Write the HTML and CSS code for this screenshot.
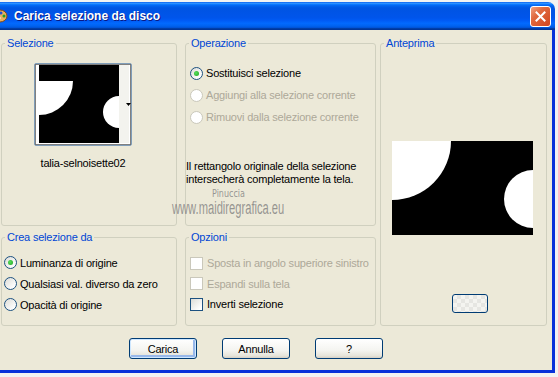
FILE: index.html
```html
<!DOCTYPE html>
<html lang="it">
<head>
  <meta charset="UTF-8">
  <meta name="viewport" content="width=device-width, initial-scale=1.0">
  <title>Carica selezione da disco</title>
  <link rel="stylesheet" href="styles.css">
</head>
<body>

  <div class="window">
    <div class="titlebar">
      <svg class="app-icon" width="16" height="16" viewBox="0 0 16 16">
        <ellipse cx="8" cy="8" rx="7" ry="6" fill="#e8b060" stroke="#8a4a10" stroke-width="1"/>
        <circle cx="5" cy="6" r="1.5" fill="#d02020"/>
        <circle cx="9" cy="5" r="1.5" fill="#2050d0"/>
        <circle cx="12" cy="8" r="1.5" fill="#20a020"/>
        <circle cx="7" cy="10" r="1.6" fill="#fff"/>
      </svg>
      <span class="title">Carica selezione da disco</span>
      <button class="close-btn" title="Chiudi">
        <svg width="11" height="11" viewBox="0 0 11 11">
          <path d="M1.5 1.5 L9.5 9.5 M9.5 1.5 L1.5 9.5" stroke="#fff" stroke-width="2" stroke-linecap="square"/>
        </svg>
      </button>
    </div>

    <div class="content">
      <div class="groups">

        <fieldset class="group g-sel">
          <legend>Selezione</legend>
          <div class="thumb">
            <svg width="96" height="81" viewBox="0 0 96 81">
              <rect x="4" y="1" width="80" height="78" fill="#000"/>
              <rect x="84" y="1" width="10" height="78" fill="#f3f3ee"/>
              <path d="M4 17 H38 A34 34 0 0 1 4 51 Z" fill="#fff"/>
              <path d="M84 32 A16 16 0 0 0 84 64 Z" fill="#fff"/>
              <path d="M91 39 H96 L93.5 42 Z" fill="#000"/>
              <rect x="0.5" y="0.5" width="95" height="80" fill="none" stroke="#000" stroke-width="1" stroke-dasharray="1 1"/>
            </svg>
          </div>
          <div class="thumb-name">talia-selnoisette02</div>
        </fieldset>

        <fieldset class="group g-op">
          <legend>Operazione</legend>
          <div class="options op-list">
            <label class="opt"><span class="radio checked"></span>Sostituisci selezione</label>
            <label class="opt disabled"><span class="radio"></span>Aggiungi alla selezione corrente</label>
            <label class="opt disabled"><span class="radio"></span>Rimuovi dalla selezione corrente</label>
          </div>
          <p class="info">Il rettangolo originale della selezione<br>intersecherà completamente la tela.</p>
        </fieldset>

        <fieldset class="group g-prev">
          <legend>Anteprima</legend>
          <svg class="preview" width="141" height="94" viewBox="0 0 141 94">
            <rect width="141" height="94" fill="#000"/>
            <path d="M0 0 H59 A59 59 0 0 1 0 59 Z" fill="#fff"/>
            <path d="M141 29 A29 29 0 0 0 141 87 Z" fill="#fff"/>
          </svg>
          <button class="bg-btn"></button>
        </fieldset>

        <fieldset class="group g-crea">
          <legend>Crea selezione da</legend>
          <div class="options crea-list">
            <label class="opt"><span class="radio checked"></span>Luminanza di origine</label>
            <label class="opt"><span class="radio"></span>Qualsiasi val. diverso da zero</label>
            <label class="opt"><span class="radio"></span>Opacità di origine</label>
          </div>
        </fieldset>

        <fieldset class="group g-opz">
          <legend>Opzioni</legend>
          <div class="options opz-list">
            <label class="opt disabled"><span class="check"></span>Sposta in angolo superiore sinistro</label>
            <label class="opt disabled"><span class="check"></span>Espandi sulla tela</label>
            <label class="opt"><span class="check"></span>Inverti selezione</label>
          </div>
        </fieldset>

      </div>

      <div class="buttons">
        <button class="btn default">Carica</button>
        <button class="btn">Annulla</button>
        <button class="btn">?</button>
      </div>
    </div>

    <!-- filigrana dello screenshot -->
    <div class="watermark">
      <span class="wm-name">Pinuccia</span>
      <span class="wm-site">www.maidiregrafica.eu</span>
    </div>
  </div>

</body>
</html>
```

FILE: styles.css
```css
body {
  margin: 0;
  padding: 0;
  background-color: #f2f2f2;
  font-family: "Liberation Sans", Arial, sans-serif;
  font-size: 11px;
  letter-spacing: -0.2px;
  color: #000;
  overflow: hidden;
}
.window {
  position: relative;
  width: 555px;
  margin-top: 2px;
}
.titlebar {
  display: flex;
  align-items: center;
  height: 28px;
  border-top-right-radius: 7px;
  background: linear-gradient(to bottom, #0058ee 0%, #3593ff 4%, #288eff 6%, #127dff 8%, #036ffc 10%, #0262ee 14%, #0057e5 20%, #0054e3 24%, #0055eb 56%, #005bf5 66%, #026afe 76%, #0062ef 86%, #0052d6 92%, #0040ab 94%, #003092 100%);
}
.app-icon {
  margin-left: -8px;
  flex-shrink: 0;
}
.title {
  margin-left: 6px;
  color: white;
  font-weight: bold;
  font-size: 12px;
  letter-spacing: 0;
  text-shadow: 1px 1px #0a1883;
}
.close-btn {
  margin-left: auto;
  margin-right: 4px;
  width: 21px;
  height: 21px;
  padding: 0;
  border: 1px solid white;
  border-radius: 3px;
  background: linear-gradient(135deg, #f0a080 0%, #e06a40 35%, #d2451c 100%);
  display: flex;
  justify-content: center;
  align-items: center;
}
.content {
  box-sizing: border-box;
  height: 343px;
  padding: 7px 0 0 1px;
  background-color: #ece9d8;
  border-right: 3px solid #0831d9;
  border-bottom: 3px solid #0831d9;
}
.groups {
  display: grid;
  grid-template-columns: 180px 199px 167px;
  grid-template-rows: 189px 95px;
  row-gap: 5px;
}
.group {
  margin: 0;
  padding: 0;
  min-width: 0;
  border: 1px solid #d0d0bf;
  border-radius: 3px;
}
.group legend {
  padding: 0 2px;
  margin-left: 3px;
  line-height: 13px;
  color: #0046d5;
}
.g-sel, .g-crea {
  width: 176px;
  box-sizing: border-box;
}
.g-op, .g-opz {
  width: 191px;
  box-sizing: border-box;
  margin-left: 4px;
}
.g-prev {
  grid-column: 3;
  grid-row: 1 / span 2;
}
.g-crea {
  grid-column: 1;
  grid-row: 2;
}
.g-opz {
  grid-column: 2;
  grid-row: 2;
}

/* Selezione */
.g-sel {
  display: flex;
  flex-direction: column;
  align-items: center;
  padding-right: 12px;
}
.thumb {
  margin-top: 13px;
  width: 96px;
  height: 81px;
  border: 1px solid #7f9db9;
  border-radius: 2px;
  background: white;
}
.thumb svg {
  display: block;
}
.thumb-name {
  margin-top: 11px;
  line-height: 13px;
}

/* opzioni */
.options {
  display: flex;
  flex-direction: column;
}
.opt {
  display: flex;
  align-items: center;
  gap: 3px;
  height: 22px;
  white-space: nowrap;
}
.opt.disabled {
  color: #aca899;
}
.op-list {
  padding: 12px 0 0 4px;
}
.crea-list {
  padding: 8px 0 0 2px;
}
.crea-list .opt {
  height: 21px;
}
.opz-list {
  padding: 9px 0 0 4px;
}
.opz-list .opt {
  height: 20.5px;
  gap: 4px;
}
.radio {
  position: relative;
  box-sizing: border-box;
  width: 13px;
  height: 13px;
  border-radius: 50%;
  border: 1px solid #1c5180;
  background: linear-gradient(135deg, #dcdcd7 0%, #ffffff 85%);
  flex-shrink: 0;
}
.radio.checked::after {
  content: "";
  position: absolute;
  left: 3px;
  top: 3px;
  width: 5px;
  height: 5px;
  border-radius: 50%;
  background: radial-gradient(circle at 40% 40%, #55e05c, #21a121);
}
.disabled .radio {
  border-color: #cac8bb;
  background: #fff;
}
.check {
  box-sizing: border-box;
  width: 13px;
  height: 13px;
  border: 1px solid #1c5180;
  background: linear-gradient(135deg, #dcdcd7 0%, #ffffff 85%);
  flex-shrink: 0;
}
.disabled .check {
  border-color: #cac8bb;
  background: #fff;
}
.info {
  margin: 32px 0 0 0;
  line-height: 13px;
}

/* Anteprima */
.g-prev {
  display: flex;
  flex-direction: column;
  align-items: flex-start;
}
.preview {
  display: block;
  margin: 91px 0 0 11px;
}
.bg-btn {
  margin: 59px 0 0 71px;
  width: 36px;
  height: 19px;
  padding: 0;
  border: 1px solid #003c74;
  border-radius: 3px;
  background-color: #f4f4f0;
  background-image:
    linear-gradient(45deg, #e6e6e2 25%, transparent 25%, transparent 75%, #e6e6e2 75%),
    linear-gradient(45deg, #e6e6e2 25%, transparent 25%, transparent 75%, #e6e6e2 75%);
  background-size: 8px 8px;
  background-position: 0 0, 4px 4px;
}

/* pulsanti */
.buttons {
  display: flex;
  gap: 25px;
  margin-top: 12px;
  padding-left: 128px;
}
.btn {
  width: 68px;
  height: 21px;
  padding: 0;
  border: 1px solid #003c74;
  border-radius: 3px;
  background: linear-gradient(to bottom, #ffffff 0%, #f4f4f0 60%, #e6e4da 88%, #d6d0c5 100%);
  font-family: "Liberation Sans", Arial, sans-serif;
  font-size: 11px;
  letter-spacing: -0.2px;
  color: #000;
}
.btn.default {
  box-shadow: inset 0 0 0 1px #cee7ff, inset -1px -1px 0 2px #98b8ea;
}

/* filigrana */
.watermark {
  position: absolute;
  left: 172px;
  top: 186px;
  color: rgba(120, 120, 120, 0.75);
  letter-spacing: 0;
  pointer-events: none;
}
.wm-name {
  position: absolute;
  left: 40px;
  top: 0;
  font-family: "DejaVu Sans", sans-serif;
  font-size: 10px;
  transform: scaleX(0.8);
  transform-origin: left;
}
.wm-site {
  position: absolute;
  left: 0;
  top: 10px;
  font-family: "Liberation Sans", sans-serif;
  font-size: 18px;
  white-space: nowrap;
  transform: scaleX(0.62);
  transform-origin: left;
}
```
